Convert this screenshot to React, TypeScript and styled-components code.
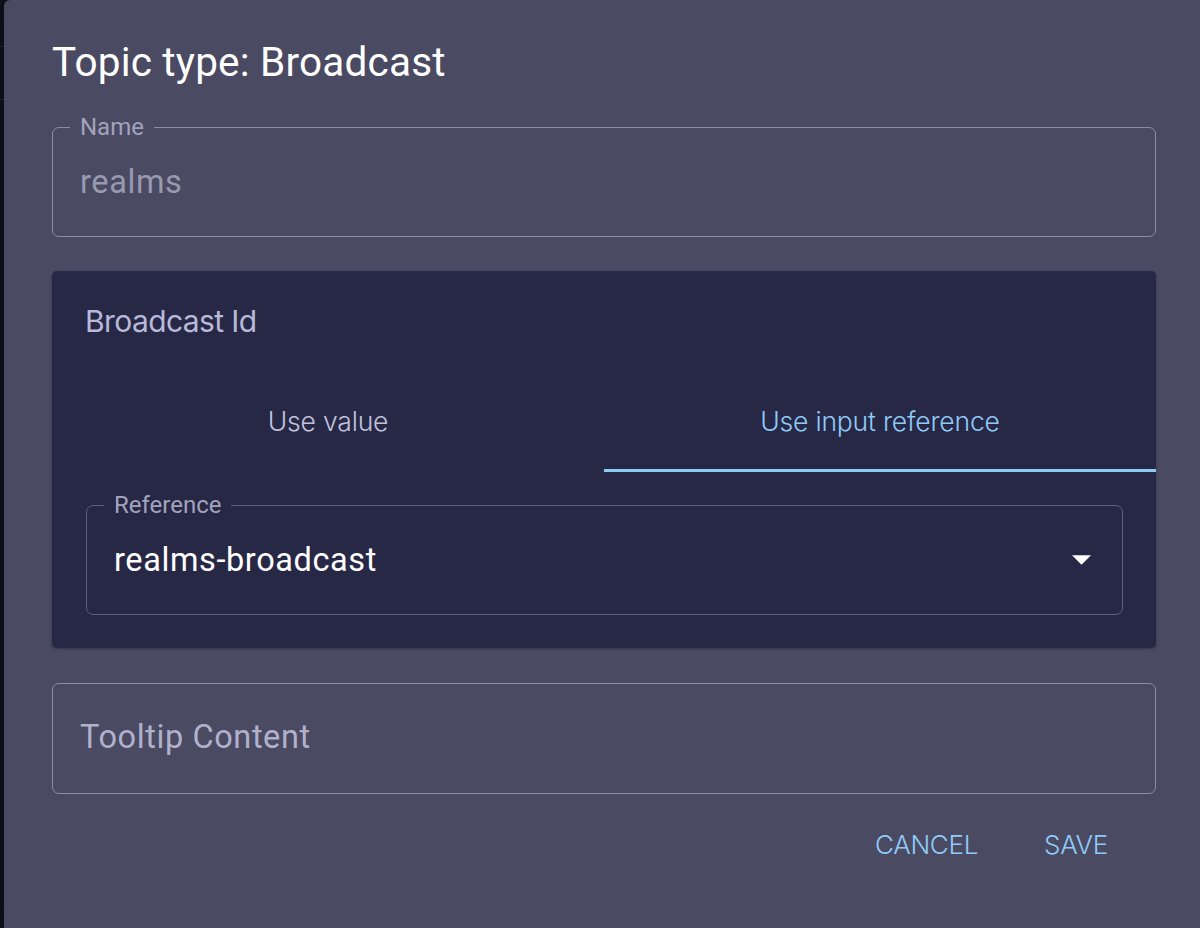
import React from 'react';
import styled, { createGlobalStyle } from 'styled-components';

const DIALOG_BG = '#4a4a63';
const PANEL_BG = '#272846';
const ACCENT = '#90caf9';

const GlobalStyle = createGlobalStyle`
  html, body {
    margin: 0;
    padding: 0;
    background: #11111d;
    overflow: hidden;
  }
  body {
    font-family: Roboto, "Liberation Sans", sans-serif;
  }
`;

export default function App() {
  return (
    <>
      <GlobalStyle />
      <Screen>
        <Backdrop>
          <BackLine />
          <BackLine />
        </Backdrop>
        <Dialog>
          <Title>Topic type: Broadcast</Title>
          <Field>
            <Legend>Name</Legend>
            <FieldRow labelled>
              <FieldValue tone="disabled">realms</FieldValue>
            </FieldRow>
          </Field>
          <Panel>
            <PanelHeading>Broadcast Id</PanelHeading>
            <Tabs>
              <Tab>Use value</Tab>
              <Tab active>Use input reference</Tab>
            </Tabs>
            <PanelBody>
              <Field dark>
                <Legend>Reference</Legend>
                <FieldRow labelled>
                  <FieldValue tone="strong">realms-broadcast</FieldValue>
                  <ArrowIcon viewBox="7 10 10 5">
                    <path d="M7 10l5 5 5-5z" fill="#ffffff" />
                  </ArrowIcon>
                </FieldRow>
              </Field>
            </PanelBody>
          </Panel>
          <Field>
            <FieldRow>
              <FieldValue tone="placeholder">Tooltip Content</FieldValue>
            </FieldRow>
          </Field>
          <Actions>
            <ActionButton>CANCEL</ActionButton>
            <ActionButton>SAVE</ActionButton>
          </Actions>
        </Dialog>
      </Screen>
    </>
  );
}

const Screen = styled.div`
  display: flex;
  width: 1200px;
  height: 928px;
  overflow: hidden;
`;

const Backdrop = styled.div`
  flex: 0 0 4px;
  display: flex;
  flex-direction: column;
  padding-top: 46px;
  gap: 52px;
`;

const BackLine = styled.div`
  height: 1px;
  background: #2a2a3a;
`;

const Dialog = styled.div`
  flex: 0 0 1200px;
  box-sizing: border-box;
  background: ${DIALOG_BG};
  border-radius: 6px 0 0 0;
  padding: 34px 48px 0 48px;
  display: flex;
  flex-direction: column;
  box-shadow: 0 0 24px rgba(0, 0, 0, 0.5);
`;

const Title = styled.h2`
  margin: 0 0 25px;
  font-family: Roboto, sans-serif;
  font-weight: 400;
  font-size: 40.5px;
  line-height: 56px;
  color: #ffffff;
  letter-spacing: 0.2px;
`;

const Field = styled.fieldset<{ dark?: boolean }>`
  margin: 0;
  padding: 0;
  min-width: 0;
  border: 1.5px solid ${(p) => (p.dark ? '#5c5d78' : '#8c8ca3')};
  border-radius: 7px;
`;

const Legend = styled.legend`
  margin-left: 17px;
  padding: 0 10px;
  font-family: Roboto, sans-serif;
  font-size: 24px;
  line-height: 24px;
  color: #a3a3bc;
`;

const FieldRow = styled.div<{ labelled?: boolean }>`
  box-sizing: border-box;
  height: ${(p) => (p.labelled ? '97px' : '109px')};
  padding: ${(p) => (p.labelled ? '0 31px 12px 27px' : '0 31px 3px 27px')};
  display: flex;
  align-items: center;
  justify-content: space-between;
`;

const valueColors = {
  disabled: '#9999b0',
  strong: '#ffffff',
  placeholder: '#b1b1cc',
};

const FieldValue = styled.div<{ tone: keyof typeof valueColors }>`
  font-family: Roboto, sans-serif;
  font-size: 32.5px;
  line-height: 38px;
  color: ${(p) => valueColors[p.tone]};
  letter-spacing: 0.6px;
`;

const ArrowIcon = styled.svg`
  width: 19px;
  height: 10px;
`;

const Panel = styled.section`
  margin: 34px 0 35px;
  background: ${PANEL_BG};
  border-radius: 5px;
  display: flex;
  flex-direction: column;
  padding-bottom: 33px;
  box-shadow: 0 1px 3px rgba(0, 0, 0, 0.3);
`;

const PanelHeading = styled.div`
  padding: 32px 33px 0;
  font-family: Inter, "Open Sans", sans-serif;
  font-weight: 400;
  font-size: 30px;
  line-height: 36px;
  letter-spacing: -0.6px;
  color: #b9b9d9;
`;

const Tabs = styled.div`
  display: grid;
  grid-template-columns: 1fr 1fr;
  margin-top: 47px;
`;

const Tab = styled.div<{ active?: boolean }>`
  height: 86px;
  box-sizing: border-box;
  display: flex;
  justify-content: center;
  padding-top: 18px;
  font-family: Inter, "Open Sans", sans-serif;
  font-weight: 300;
  font-size: 26.5px;
  line-height: 34px;
  letter-spacing: -0.2px;
  color: ${(p) => (p.active ? ACCENT : '#c2c2dc')};
  border-bottom: 3.5px solid ${(p) => (p.active ? ACCENT : 'transparent')};
`;

const PanelBody = styled.div`
  padding: 21px 33px 0 34px;
`;

const Actions = styled.div`
  display: flex;
  justify-content: flex-end;
  gap: 38px;
  padding: 28px 34px 0 0;
`;

const ActionButton = styled.button`
  background: none;
  border: none;
  padding: 6px 14px;
  font-family: Inter, "Open Sans", sans-serif;
  font-weight: 300;
  font-size: 26px;
  line-height: 34px;
  letter-spacing: -0.3px;
  color: ${ACCENT};
  cursor: pointer;
`;
